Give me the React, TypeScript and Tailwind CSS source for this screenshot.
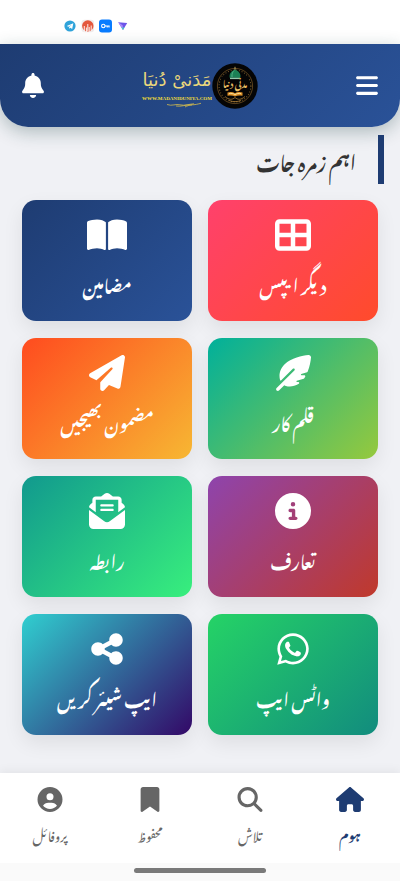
import type { IconType } from "react-icons";
import {
  FaBars,
  FaBell,
  FaBookmark,
  FaBookOpen,
  FaCircleInfo,
  FaCircleUser,
  FaEnvelopeOpenText,
  FaFeatherPointed,
  FaHouse,
  FaMagnifyingGlass,
  FaPaperPlane,
  FaShareNodes,
  FaTableCellsLarge,
  FaWhatsapp,
} from "react-icons/fa6";

type Category = { label: string; icon: IconType; gradient: string; size?: string };

const categories: Category[] = [
  { label: "دیگر ایپس", icon: FaTableCellsLarge, gradient: "from-[#ff416c] to-[#ff4b2b]" },
  { label: "مضامین", icon: FaBookOpen, gradient: "from-[#1e3c72] to-[#2a5298]", size: "h-9 w-10" },
  { label: "قلم کار", icon: FaFeatherPointed, gradient: "from-[#00b09b] to-[#96c93d]" },
  { label: "مضمون بھیجیں", icon: FaPaperPlane, gradient: "from-[#ff4b1f] to-[#f7b733]" },
  { label: "تعارف", icon: FaCircleInfo, gradient: "from-[#8e44ad] to-[#c0392b]" },
  { label: "رابطہ", icon: FaEnvelopeOpenText, gradient: "from-[#11998e] to-[#38ef7d]" },
  { label: "واٹس ایپ", icon: FaWhatsapp, gradient: "from-[#25d366] to-[#128c7e]" },
  { label: "ایپ شیئر کریں", icon: FaShareNodes, gradient: "from-[#30cfd0] to-[#330867]" },
];

const tabs = [
  { label: "ہوم", icon: FaHouse, active: true },
  { label: "تلاش", icon: FaMagnifyingGlass, active: false },
  { label: "محفوظ", icon: FaBookmark, active: false },
  { label: "پروفائل", icon: FaCircleUser, active: false },
];

function StatusBar() {
  return (
    <div dir="ltr" className="flex h-11 items-center bg-white pt-2 pl-16">
      <svg viewBox="0 0 66 14" className="h-3.5 w-[66px]" aria-hidden="true">
        <circle cx="6" cy="7" r="5.6" fill="#2fa3da" />
        <path d="M2.8 7 9.3 4.3 8.2 10.1 6.3 8.7 5.3 9.7 5.1 8 7.8 5.7 4.5 7.7Z" fill="#fff" />
        <rect x="17.5" y="0.7" width="12.6" height="12.6" rx="3" fill="#f1ecec" />
        <circle cx="23.8" cy="7" r="5.7" fill="#e4573d" />
        <path d="M20.3 12.5V7M22.4 13V8.5M25.2 13V8M27.2 12V6.5M23.8 12.5V5" stroke="#fff" strokeWidth="0.9" />
        <rect x="35" y="0.4" width="13" height="13.2" rx="3" fill="#087cff" />
        <circle cx="39.3" cy="7" r="1.7" fill="none" stroke="#fff" strokeWidth="1.1" />
        <path d="M41 7H45.6M43.2 7V8.5M45 7V8.5" stroke="#fff" strokeWidth="1.1" />
        <path d="M54.2 3.2 63.2 4.1 59 11Z" fill="#6d55e8" />
        <path d="M54.2 3.2 58.7 6.3 59 11Z" fill="#a78bfa" />
        <path d="M57.4 8.4 60.6 8.4 59 11Z" fill="#48c9c4" />
      </svg>
    </div>
  );
}

function Emblem() {
  return (
    <svg viewBox="0 0 46 46" className="size-[46px] shrink-0" aria-hidden="true">
      <circle cx="23" cy="23" r="22.7" fill="#050505" />
      <circle cx="23" cy="23" r="17.6" fill="none" stroke="#94692d" strokeWidth="0.6" />
      <circle cx="23" cy="23" r="15.9" fill="none" stroke="#b98a3f" strokeWidth="1.1" strokeDasharray="1 1.8" opacity="0.6" />
      <rect x="9" y="14" width="28" height="13" fill="#050505" />
      <path d="M23 3.8V7" stroke="#d9c779" strokeWidth="0.8" />
      <path d="M17.7 14.7c-.8-4.5 2-6.6 5.3-8.2 3.3 1.6 6.1 3.7 5.3 8.2Z" fill="#1b8055" />
      <path d="M20 14c-.4-3.3.8-5.3 2.2-6.5" stroke="#56b58a" strokeWidth="0.9" fill="none" />
      <path d="M18 15.4H28" stroke="#91c9ae" strokeWidth="1.4" />
      <text
        x="23"
        y="25"
        textAnchor="middle"
        fontSize="9"
        fontWeight="700"
        fill="#e6bb62"
        fontFamily="Noto Nastaliq Urdu, DejaVu Sans, sans-serif"
      >
        مدنی دنیا
      </text>
      <path d="M15.5 29.5c3-.9 5.5-.6 7.5.8 2-1.4 4.5-1.7 7.5-.8v3.3c-3-.6-5.5-.5-7.5.6-2-1.1-4.5-1.2-7.5-.6Z" fill="#e2952b" />
      <path d="M17 30.5c2.4-.3 4.3 0 6 1.2 1.7-1.2 3.6-1.5 6-1.2" stroke="#fff0b0" strokeWidth="0.8" fill="none" />
      <path d="M13 33.5c4 3.5 7 3.5 10 1 3 2.5 6 2.5 10-1" stroke="#c28e3d" strokeWidth="0.7" fill="none" />
      <path d="M17 37.5c4 1.5 8 1.5 12 0" stroke="#c28e3d" strokeWidth="0.7" fill="none" />
    </svg>
  );
}

function Logo() {
  return (
    <div dir="ltr" className="flex items-center">
      <div className="flex w-[70px] flex-col items-center text-[#ead77c]">
        <span dir="rtl" className="font-['DejaVu_Sans',sans-serif] text-lg leading-8 whitespace-nowrap">
          مَدَنیْ دُنیَا
        </span>
        <span className="font-['Liberation_Serif',serif] text-[5px] leading-[6px] font-bold text-[#f3df35]">
          WWW.MADANIDUNIYA.COM
        </span>
        <svg viewBox="0 0 70 6" className="h-1.5 w-[70px]" aria-hidden="true">
          <path
            d="M25 2.5c5 2 9-1 13 .3 5 1.3 9-.8 14-1M34 4c5 1 10-1.5 15-1.2 4 .2 7-.8 10-1.5M43 5c2-1 4-2 7-2"
            stroke="#d6bd4c"
            strokeWidth="0.8"
            fill="none"
          />
        </svg>
      </div>
      <Emblem />
    </div>
  );
}

function Header() {
  return (
    <header className="flex h-[83px] items-center justify-between rounded-b-[28px] bg-linear-135/srgb from-[#1e3c72] to-[#2a5298] px-[22px] text-white shadow-[0_5px_18px_rgba(20,60,60,0.3)]">
      <button type="button" aria-label="مینو">
        <FaBars className="h-[25px] w-[22px]" />
      </button>
      <Logo />
      <button type="button" aria-label="اطلاعات">
        <FaBell className="h-[25px] w-[22px]" />
      </button>
    </header>
  );
}

function CategoryCard({ label, icon: Icon, gradient, size = "size-9" }: Category) {
  return (
    <button
      type="button"
      className={`flex h-[121px] flex-col items-center rounded-[14px] bg-linear-135/srgb pt-[17px] text-white shadow-[0_8px_20px_rgba(0,0,0,0.08)] ${gradient}`}
    >
      <Icon className={size} />
      <span className="mt-2.5 text-[17px] leading-10 font-bold whitespace-nowrap">{label}</span>
    </button>
  );
}

function TabBar() {
  return (
    <nav className="grid h-[90px] grid-cols-4 bg-white shadow-[0_-2px_10px_rgba(0,0,0,0.06)]">
      {tabs.map(({ label, icon: Icon, active }) => (
        <a
          key={label}
          href="#"
          aria-current={active ? "page" : undefined}
          className={`flex flex-col items-center pt-3.5 ${active ? "font-bold text-[#1e3c72]" : "text-[#666666]"}`}
        >
          <Icon className="h-[25px] w-7" />
          <span className="mt-2 text-[13px] leading-7">{label}</span>
        </a>
      ))}
    </nav>
  );
}

export default function App() {
  return (
    <div
      dir="rtl"
      lang="ur"
      className="flex min-h-screen flex-col bg-[#f0f1f5] font-['Noto_Nastaliq_Urdu','DejaVu_Sans',sans-serif]"
    >
      <StatusBar />
      <Header />
      <main className="flex-1 pb-8">
        <h1 className="mx-4 mt-2 border-r-[6px] border-[#1e3c72] pr-[22px] text-[19px] leading-[49px] font-bold text-[#333333]">
          اہم زمرہ جات
        </h1>
        <div className="mt-4 grid grid-cols-2 gap-x-4 gap-y-[17px] px-[22px]">
          {categories.map((category) => (
            <CategoryCard key={category.label} {...category} />
          ))}
        </div>
      </main>
      <TabBar />
      <div className="flex h-[18px] justify-center bg-[#fafafa] pt-[5px]">
        <div className="h-[5px] w-[132px] rounded-full bg-[#7a7a7a]" />
      </div>
    </div>
  );
}
